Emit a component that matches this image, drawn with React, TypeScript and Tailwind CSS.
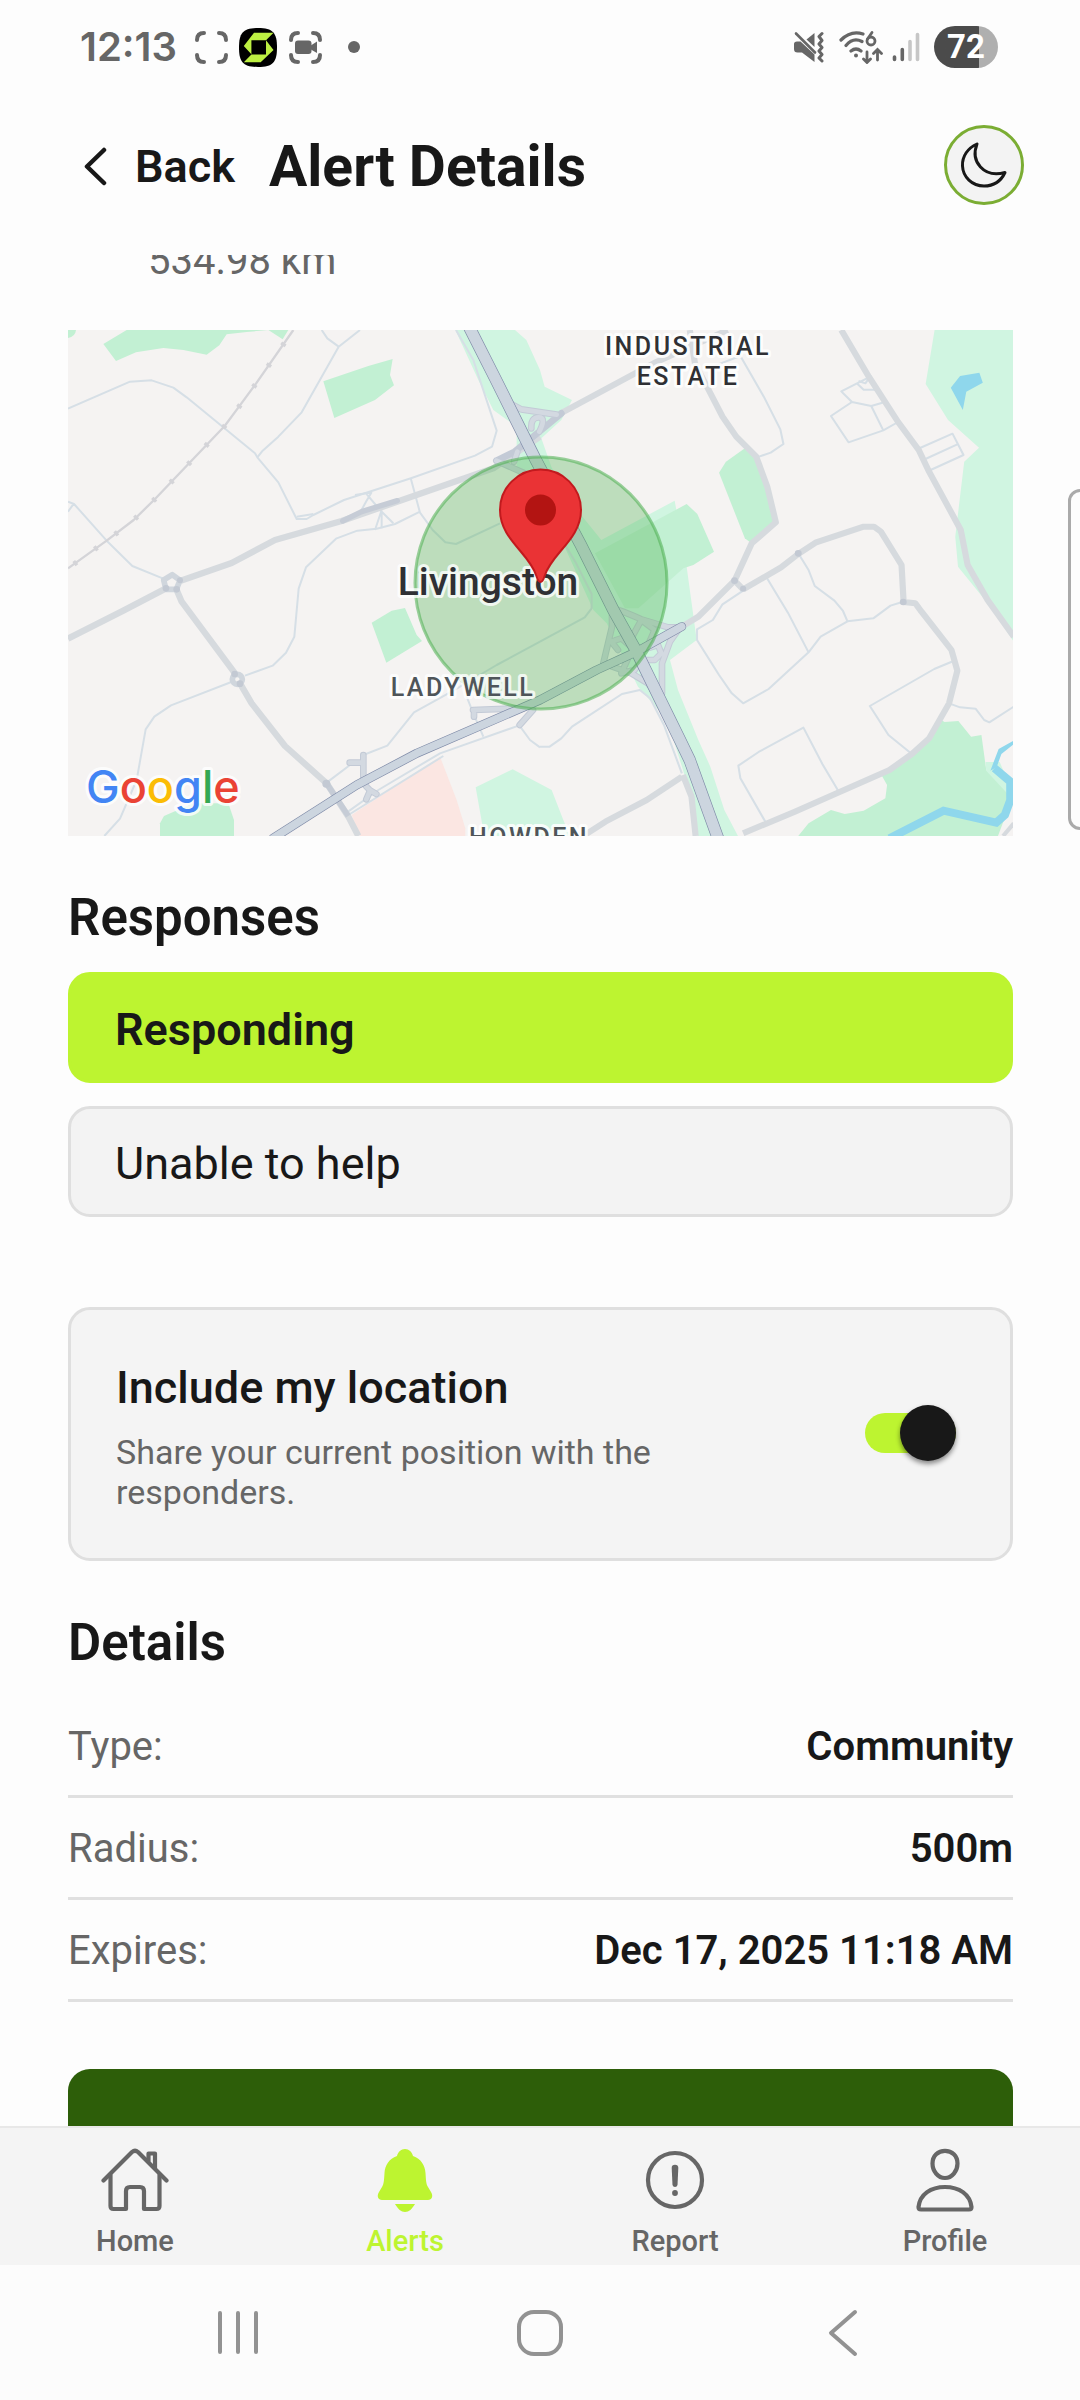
import React, { useState } from "react";

function StatusBar() {
  return (
    <div className="flex h-[78px] shrink-0 items-center justify-between pt-4 pr-[82px] pl-20 text-[#666666]">
      <div className="flex items-center">
        <span className="font-['Inter',sans-serif] text-[40px] leading-[48px] font-semibold">12:13</span>
        <svg className="ml-[18px]" width="33" height="33" viewBox="0 0 33 33" fill="none" stroke="currentColor" strokeWidth="4" strokeLinecap="round" aria-hidden="true">
          <path d="M2 9Q2 2 9 2M24 2Q31 2 31 9M31 24Q31 31 24 31M9 31Q2 31 2 24" />
        </svg>
        <svg className="ml-[11px]" width="38" height="39" viewBox="0 0 38 39" aria-hidden="true">
          <path d="M19 0C34 0 38 5 38 19.5S34 39 19 39 0 34 0 19.5 4 0 19 0Z" fill="#000" />
          <path d="M15 4.7H34.5L27 12.3H12.4V26.3L4.8 18Z" fill="#bdf042" />
          <path d="M27 12.3L34.5 22 21.7 34.3H4.8L12.4 26.6H27Z" fill="#bdf042" />
        </svg>
        <svg className="ml-3" width="33" height="33" viewBox="0 0 33 33" aria-hidden="true">
          <path d="M2 9Q2 2 9 2M24 2Q31 2 31 9M31 24Q31 31 24 31M9 31Q2 31 2 24" fill="none" stroke="currentColor" strokeWidth="4" strokeLinecap="round" />
          <rect x="6" y="9.500" width="16.500" height="13.500" rx="3" fill="currentColor" />
          <path d="M21 15L28 10.500V22L21 18Z" fill="currentColor" />
        </svg>
        <span className="ml-[26px] size-3 rounded-full bg-[#666666]" />
      </div>
      <div className="flex items-center">
        <svg width="30" height="32" viewBox="0 0 30 32" aria-hidden="true">
          <path d="M2 2.500L21 21.500" stroke="currentColor" strokeWidth="2.600" strokeLinecap="round" />
          <path d="M0 13Q0 10.500 3 10.500H6.500L20.500 23.500V31L8 21.500H3.500Q0 21.500 0 18Z" fill="currentColor" />
          <path d="M12.500 8.500L20.500 2V16Z" fill="currentColor" />
          <path d="M28 2.500L25 5.500 28 9.500 25 13 28 16.500 25 20 28 23.500 25 27 28 30" fill="none" stroke="currentColor" strokeWidth="3" strokeLinejoin="round" strokeLinecap="round" />
        </svg>
        <svg className="ml-[15px]" width="44" height="34" viewBox="0 0 44 34" fill="none" stroke="currentColor" strokeWidth="3.200" strokeLinecap="round" aria-hidden="true">
          <path d="M2 10Q12 0 24 4M7 15.500Q14 7 23 11.500M12 21Q17 17 22 21" />
          <circle cx="17" cy="25.500" r="2" fill="currentColor" stroke="none" />
          <circle cx="32" cy="11" r="4" strokeWidth="2.800" />
          <path d="M28.500 9L33 2.500" strokeWidth="2.800" />
          <path d="M28 22V32M24.500 29L28 32.500 31.500 29M38.500 30V20M34.500 23.500L38.500 19.500 42.500 23.500" strokeWidth="2.800" />
        </svg>
        <svg className="ml-[9px]" width="28" height="32" viewBox="0 0 28 32" stroke="currentColor" strokeWidth="3.600" strokeLinecap="round" aria-hidden="true">
          <path d="M2.500 26V28.500M10.300 18.500V28.500" />
          <path d="M18 10.500V28.500M25.500 3.500V28.500" stroke="#c6c6c6" />
        </svg>
        <span className="ml-3.5 flex h-[42px] w-16 items-center justify-center rounded-full bg-linear-to-r from-[#4b4b4b] from-71% to-[#afafaf] to-71% text-[33px] leading-10 font-bold text-white">
          72
        </span>
      </div>
    </div>
  );
}

function Header() {
  return (
    <header className="flex h-[177px] shrink-0 items-center pr-14 pl-[84px]">
      <button type="button" className="flex items-center text-[45px] leading-[54px] font-semibold">
        <svg className="mr-[27px]" width="24" height="40" viewBox="0 0 24 40" fill="none" stroke="currentColor" strokeWidth="4.500" strokeLinecap="round" strokeLinejoin="round" aria-hidden="true">
          <path d="M20 3L3 19.500L20 36" />
        </svg>
        Back
      </button>
      <h1 className="ml-[34px] text-[57px] leading-[66px] font-bold">Alert Details</h1>
      <button type="button" aria-label="Switch to dark theme" className="mb-[3px] ml-auto flex size-20 items-center justify-center rounded-full border-3 border-[#7bad33] bg-[#f3f3f3]">
        <svg width="48" height="48" viewBox="16 17 48 48" fill="none" stroke="currentColor" strokeWidth="3" strokeLinejoin="round" aria-hidden="true">
          <path d="M33 20C24 24 18 32 18.500 42C19 53 28 62 40 62C50 62 57 57 61 48.500C50 51.500 42 49 36.500 43C31 37 29.500 29 33 20Z" />
        </svg>
      </button>
    </header>
  );
}

function AlertMap() {
  return (
    <svg
      className="mt-[43px] block h-[506px] w-full bg-[#f5f3f2]"
      viewBox="0 0 945 506"
      preserveAspectRatio="xMidYMid slice"
      role="img"
      aria-label="Map of Livingston with the alert radius"
    >
      <g transform="scale(0.33333)" fill="none" strokeLinejoin="round">
        <rect width="2840" height="1520" fill="#f5f3f2" />

        {/* parks and woodland */}
        <g transform="translate(-24 -30)" fill="#c2f0d3">
          <path d="M130 72L200 30H625L560 36 500 43 478 76 440 104 370 90 310 84 228 97 168 123Z" />
          <path d="M625 30H685L668 58Z" />
          <path d="M24 30H48Q46 50 24 54Z" />
          <path d="M790 184L925 138 998 117 990 165 1002 196 945 240 823 294Z" />
          <path d="M935 908L995 872 1035 864 1070 945 1086 963 979 1028Z" />
          <path d="M300 1548V1510L312 1488 400 1450H505L522 1500V1548Z" />
          <path d="M1247 1402L1358 1348 1475 1410 1510 1500 1530 1548H1275L1268 1520Z" fill="#d0f5e1" />
          <path d="M875 1485L1140 1310 1190 1440 1216 1525V1548H900Z" fill="#fbe6e2" />
        </g>
        <path
          fill="#d0f5e1"
          d="M1162 0H1341L1375 30 1416 120 1430 170 1512 210 1480 270 1420 325 1450 410 1495 500 1600 630 1820 512 1856 710 1886 930 1806 990 1830 1080 1891 1230 1927 1310 1969 1440 2010 1518H1890L1870 1400 1798 1170 1710 1070 1616 880 1576 840 1476 620 1346 420 1346 290 1276 240 1231 150Z"
        />
        <path fill="#c2f0d3" d="M1581 670L1856 522 1888 552 1938 665 1876 705 1846 715 1711 835H1671Z" />
        <g transform="translate(1416 -30) scale(1.033 1)">
          <path fill="#c2f0d3" d="M520 458L540 425 600 381 630 410 665 500 690 607 612 668 595 655Z" />
          <path fill="#d0f5e1" d="M1146 30H1376V965L1300 850 1214 740 1206 650 1232 425 1275 383 1185 300 1120 192Z" />
          <path fill="#8fd7ec" d="M1193 203L1220 168 1276 158 1286 188 1238 215 1228 270Z" />
          <path fill="#c2f0d3" d="M750 1548L780 1510 845 1470 885 1482 940 1472 1003 1435 1008 1395 990 1362 1060 1318 1130 1250 1162 1198 1175 1206 1215 1203 1252 1250 1282 1245 1296 1350 1362 1420 1355 1480 1330 1548Z" />
          <path fill="#d0f5e1" d="M1294 1326H1335L1366 1400V1430L1296 1352Z" />
          <path stroke="#8fd7ec" strokeWidth="24" strokeLinejoin="miter" d="M1015 1555L1172 1472 1325 1508 1350 1485 1366 1440V1385L1320 1345" />
          <path fill="#8fd7ec" d="M1376 1262L1332 1287 1308 1352 1326 1342 1340 1302 1376 1272Z" />
        </g>

        {/* local streets */}
        <g transform="translate(-24 -30)" stroke="#d6dfe6" strokeWidth="6">
          <path d="M24 266L210 185 275 181 340 203 380 232 585 400 592 412 655 487 710 597H740L760 585 852 540 1055 474 1245 407 1296 380 1310 332 1283 250 1240 120 1188 30" />
          <path d="M710 590L760 582" />
          <path d="M785 30L802 55 836 80 900 30M836 80L725 277 655 350 608 392 592 412" />
          <path d="M24 545L42 552 140 662 217 738 310 776M42 550L24 575" />
          <path d="M885 525L918 520 934 518 918 545 902 575M918 520L960 570 1000 610M965 570L945 630M965 575V625" />
          <path d="M1052 474L1080 578 1118 630 1156 667 1188 672 1320 610M1080 575L1005 612 950 626 892 632 828 656 738 742 716 806 703 950 678 998 638 1037 555 1067" />
          <path d="M514 1086L333 1156 283 1190 257 1228 230 1380 180 1496 133 1548" />
          <path d="M1440 965L1310 1035 1180 1112 1062 1177 982 1277 910 1305M1220 1130L1240 1180 1270 1250M860 1478L955 1410 1140 1300 1378 1216 1410 1260 1440 1282" />
          <path d="M800 1388L870 1335M865 1485L1150 1308" />
        </g>
        <g transform="translate(1416 -30) scale(1.033 1)" stroke="#d6dfe6" strokeWidth="6">
          <path d="M0 965L130 892 150 865V822L105 730 70 670" />
          <path d="M0 1280H28L62 1255 93 1220 238 1122 290 1110 320 1135 360 1215 412 1360" />
          <path d="M500 140L582 108 650 230 698 328 707 372 670 398 630 412" />
          <path d="M955 172L875 214 906 246 845 288 896 367 997 331 1040 306M906 246L962 258 1002 246M962 258L997 331M920 190L940 209H980M925 183L945 190 955 175" />
          <path d="M1097 387L1198 341 1230 405 1128 453M1113 420L1212 373" />
          <path d="M590 812L530 853 502 900 456 928V960L520 1065 557 1120 590 1150 664 1107 780 997 815 950 893 904 968 895 1018 857 1052 846M655 767L720 878 780 997M750 700L780 750 798 798 855 842 880 873 893 904" />
          <path d="M1208 1020L1145 1047 958 1158 1012 1245 1080 1302M1188 1150L1220 1162 1265 1166 1290 1200 1305 1207 1376 1160" />
          <path d="M867 1414L820 1332 765 1223 635 1296 576 1337 582 1375 660 1515" />
        </g>

        {/* railway */}
        <g transform="translate(-24 -30)" stroke="#d4d4d8">
          <path strokeWidth="7" d="M24 745L140 662 221 600 285 537 494 318 537 260 590 188 700 30" />
          <path strokeWidth="16" strokeDasharray="10 66" strokeDashoffset="-22" d="M24 745L140 662 221 600 285 537 494 318 537 260 590 188 700 30" />
        </g>

        {/* main roads */}
        <g transform="translate(-24 -30)" stroke="#d6dade" strokeWidth="19">
          <path d="M24 956L190 872 318 805M362 782L515 729 645 660 845 603 1300 445 1440 350" />
          <path d="M350 810L365 845 525 1060M540 1090L575 1150 675 1278 800 1390 865 1490 895 1548" />
          <path stroke="#c6ccd6" strokeWidth="16" strokeLinecap="round" d="M848 603L905 575 1012 542" />
          <path stroke="#c6ccd6" strokeWidth="17" d="M803 1395L865 1488" />
          <path d="M337 764L360 781 349 808H318L311 780Z" stroke="#d0d6dd" strokeWidth="17" />
          <circle cx="532" cy="1078" r="15" stroke="#d0d6dd" strokeWidth="17" />
          <g fill="#c3c9d3" stroke="none">
            <circle cx="318" cy="805" r="10" /><circle cx="350" cy="808" r="10" /><circle cx="360" cy="781" r="9" />
            <circle cx="524" cy="1062" r="10" /><circle cx="540" cy="1091" r="10" /><circle cx="799" cy="1391" r="12" />
          </g>
        </g>
        <g transform="translate(1416 -30) scale(1.033 1)" stroke="#d6dade" strokeWidth="18">
          <path d="M60 280L330 130 545 30" />
          <path d="M435 30L450 130 490 210 530 290 570 350 628 410 660 500 685 607 615 670 565 782 460 890 420 915M565 782L590 808" />
          <path d="M590 808L700 742 750 702 800 668 940 620H970L990 635 1050 735 1056 846 1090 850 1108 875 1195 990 1212 1052 1188 1150 1130 1255 1080 1302 1015 1350 740 1475 590 1540" />
          <path d="M875 30L955 170 1040 306 1100 390 1130 455 1222 630 1242 735 1300 840 1376 950" />
          <path d="M412 1370L310 1440 190 1505 130 1545M415 1365L440 1430 452 1548" />
          <path d="M1345 1548L1376 1510" strokeWidth="12" />
          <g fill="#c3c9d3" stroke="none">
            <circle cx="565" cy="782" r="10" /><circle cx="590" cy="806" r="9" /><circle cx="750" cy="700" r="10" /><circle cx="1055" cy="846" r="10" />
          </g>
        </g>

        {/* junction slip roads */}
        <g strokeLinecap="round">
          <g stroke="#c3cad6" strokeWidth="20">
            <path d="M1326 220L1360 238 1466 254M1390 295Q1388 262 1412 262T1414 305M1480 250L1420 300 1340 365 1285 392M1348 365L1338 395M1285 392L1370 430" />
            <path d="M1650 840Q1680 850 1720 868L1800 892H1836L1806 935 1782 1000V1090M1632 850V890L1606 1000 1690 1030 1740 1060 1770 1100M1706 965L1660 925 1630 935 1650 960M1690 925L1720 870 1760 900 1740 945M1706 965L1770 945 1780 970 1760 990H1720L1700 1020 1660 1030 1680 985" />
            <path d="M845 1298L886 1298V1360M886 1275V1360L905 1380 925 1392M905 1385L895 1408M1215 1140L1345 1135M1218 1150V1160M1395 1140L1355 1185" />
          </g>
          <g stroke="#d3d9e1" strokeWidth="14">
            <path d="M1326 220L1360 238 1466 254M1390 295Q1388 262 1412 262T1414 305M1348 365L1338 395M1285 392L1370 430" />
            <path d="M1650 840Q1680 850 1720 868L1800 892H1836L1806 935 1782 1000V1090M1632 850V890L1606 1000 1690 1030 1740 1060 1770 1100M1706 965L1660 925 1630 935 1650 960M1690 925L1720 870 1760 900 1740 945M1706 965L1770 945 1780 970 1760 990H1720L1700 1020 1660 1030 1680 985" />
            <path d="M845 1298L886 1298V1360M886 1275V1360L905 1380 925 1392M905 1385L895 1408M1215 1140L1345 1135M1218 1150V1160M1395 1140L1355 1185" />
          </g>
        </g>

        {/* trunk roads */}
        <g stroke="#7f8ba8">
          <path strokeWidth="27" d="M615 1525L866 1365 1046 1270 1416 1110 1586 1020 1706 965 1841 890" strokeLinecap="round" />
          <path strokeWidth="37" d="M1203 -10L1284 150 1401 385 1536 640 1636 840 1706 965 1836 1230 1865 1290 1950 1525" />
        </g>
        <g stroke="#ccd5df">
          <path strokeWidth="23" d="M615 1525L866 1365 1046 1270 1416 1110 1586 1020 1706 965 1841 890" strokeLinecap="round" />
          <path strokeWidth="33" d="M1203 -10L1284 150 1401 385 1536 640 1636 840 1706 965 1836 1230 1865 1290 1950 1525" />
        </g>
      </g>

      <g className="text-[25px] font-medium tracking-widest" fill="#2f3034" stroke="#ffffff" strokeWidth="6" strokeOpacity="0.85" strokeLinejoin="round" style={{ paintOrder: "stroke" }}>
        <text x="620" y="25" textAnchor="middle">INDUSTRIAL</text>
        <text x="620" y="55" textAnchor="middle">ESTATE</text>
        <text x="461" y="516" textAnchor="middle" fill="#4f5559">HOWDEN</text>
      </g>

      <circle cx="473" cy="253" r="126" fill="#4caf50" fillOpacity="0.33" stroke="#4caf50" strokeOpacity="0.55" strokeWidth="3" />

      <g stroke="#ffffff" strokeWidth="6" strokeOpacity="0.8" strokeLinejoin="round" style={{ paintOrder: "stroke" }}>
        <text x="395" y="366" textAnchor="middle" fill="#4f5559" className="text-[25px] font-medium tracking-widest">LADYWELL</text>
        <text x="420" y="265" textAnchor="middle" fill="#2f3034" className="text-[39px] font-medium">Livingston</text>
        <text x="18" y="473" className="font-['Inter',sans-serif] text-[45px] font-medium">
          <tspan fill="#4285f4">G</tspan>
          <tspan fill="#ea4335">o</tspan>
          <tspan fill="#fbbc05">o</tspan>
          <tspan fill="#4285f4">g</tspan>
          <tspan fill="#34a853">l</tspan>
          <tspan fill="#ea4335">e</tspan>
        </text>
      </g>

      <path d="M472.500 252C470 252 469.500 249 468 245C461 223 432 209 432 180A40.500 40.500 0 0 1 513 180C513 209 484 223 477 245C475.500 249 475 252 472.500 252Z" fill="#ea3335" stroke="#c21a1e" strokeWidth="2" />
      <circle cx="472.500" cy="180" r="15.500" fill="#b31412" />
    </svg>
  );
}

function Responses() {
  const [choice, setChoice] = useState("Responding");
  return (
    <section>
      <h2 className="mt-[52px] text-[51px] leading-[60px] font-semibold">Responses</h2>
      <div className="mt-6 flex flex-col gap-[23px]">
        {["Responding", "Unable to help"].map((label) => (
          <button
            key={label}
            type="button"
            aria-pressed={choice === label}
            onClick={() => setChoice(label)}
            className={
              choice === label
                ? "h-[111px] rounded-[22px] border-3 border-[#bdf430] bg-[#bdf430] px-11 pt-1 text-left text-[45px] leading-[54px] font-semibold"
                : "h-[111px] rounded-[22px] border-3 border-[#dfdfdf] bg-[#f3f3f3] px-11 pt-1 text-left text-[45px] leading-[54px]"
            }
          >
            {label}
          </button>
        ))}
      </div>
    </section>
  );
}

function LocationCard() {
  const [on, setOn] = useState(true);
  return (
    <section className="mt-[90px] flex items-center justify-between rounded-[22px] border-3 border-[#dfdfdf] bg-[#f4f4f4] pt-[50px] pr-[54px] pb-[46px] pl-[45px]">
      <div className="w-[620px]">
        <label htmlFor="share-location" className="block text-[45px] leading-[56px] font-medium">
          Include my location
        </label>
        <p id="share-location-hint" className="mt-4 text-[34px] leading-10 text-[#666666]">
          Share your current position with the responders.
        </p>
      </div>
      <span className="relative mb-1.5 flex h-14 w-[91px] items-center">
        <input
          id="share-location"
          type="checkbox"
          role="switch"
          aria-describedby="share-location-hint"
          checked={on}
          onChange={() => setOn(!on)}
          className="peer h-10 w-full appearance-none rounded-full bg-[#cfcfcf] checked:bg-[#bdf430]"
        />
        <span className="pointer-events-none absolute left-0 size-14 rounded-full bg-[#181818] shadow-[0_3px_5px_rgba(0,0,0,0.45)] peer-checked:right-0 peer-checked:left-auto" />
      </span>
    </section>
  );
}

const DETAILS = [
  ["Type:", "Community"],
  ["Radius:", "500m"],
  ["Expires:", "Dec 17, 2025 11:18 AM"],
];

function Details() {
  return (
    <section>
      <h2 className="mt-[52px] text-[51px] leading-[60px] font-semibold">Details</h2>
      <dl className="mt-[23px] text-[40px] leading-12">
        {DETAILS.map(([name, value]) => (
          <div key={name} className="flex h-[102px] items-start justify-between border-b-3 border-[#e0e0e0] pt-[27px]">
            <dt className="text-[#666666]">{name}</dt>
            <dd className="font-semibold">{value}</dd>
          </div>
        ))}
      </dl>
    </section>
  );
}

const ICON = { width: 68, height: 68, viewBox: "0 0 68 68", "aria-hidden": true } as const;

function HomeIcon() {
  return (
    <svg {...ICON} fill="none" stroke="currentColor" strokeWidth="4.200" strokeLinecap="round" strokeLinejoin="round">
      <path d="M2.500 34.500L31 6Q34 3.500 37 6L65.500 34.500" />
      <path d="M9.500 29V60Q9.500 63 12.500 63H25V45Q25 41 29 41H39Q43 41 43 45V63H55.500Q58.500 63 58.500 60V29" />
      <path d="M47.500 15V7.500H54V22" />
    </svg>
  );
}

function BellIcon() {
  return (
    <svg {...ICON} fill="currentColor">
      <path d="M34 3C38 3 41 6 42 10C50 13 54 19 54.500 27C55 34 55 38 57 41L60 46C62.500 50 61 54 57 54H11C7 54 5.500 50 8 46L11 41C13 38 13 34 13.500 27C14 19 18 13 26 10C27 6 30 3 34 3Z" />
      <path d="M24 58H44C41 63 38 66 34 66S27 63 24 58Z" />
    </svg>
  );
}

function ReportIcon() {
  return (
    <svg {...ICON}>
      <circle cx="34" cy="34" r="27" fill="none" stroke="currentColor" strokeWidth="4.200" />
      <path d="M30.700 22Q30.700 18.700 34 18.700T37.300 22L36.500 39Q36 41 34 41T31.500 39Z" fill="currentColor" />
      <circle cx="34" cy="47" r="2.900" fill="currentColor" />
    </svg>
  );
}

function ProfileIcon() {
  return (
    <svg {...ICON} fill="none" stroke="currentColor" strokeWidth="4.200" strokeLinejoin="round">
      <path d="M34 4.800C41 4.800 46.500 10 46.500 17.500S41 32 34 32 21.500 25 21.500 17.500 27 4.800 34 4.800Z" />
      <path d="M7.500 61C9 48 20 41 34 41S59 48 60.500 61Q60.500 63.500 58 63.500H10Q7.500 63.500 7.500 61Z" />
    </svg>
  );
}

const TABS = [
  { label: "Home", Icon: HomeIcon, active: false },
  { label: "Alerts", Icon: BellIcon, active: true },
  { label: "Report", Icon: ReportIcon, active: false },
  { label: "Profile", Icon: ProfileIcon, active: false },
];

function TabBar() {
  return (
    <nav className="grid h-[139px] shrink-0 grid-cols-4 border-t-2 border-[#e8e8e8] bg-[#f4f4f4] pt-[18px]">
      {TABS.map(({ label, Icon, active }) => (
        <a
          key={label}
          href={`#${label.toLowerCase()}`}
          aria-current={active ? "page" : undefined}
          className={active ? "flex flex-col items-center gap-2.5 text-[#bdf430]" : "flex flex-col items-center gap-2.5 text-[#666666]"}
        >
          <Icon />
          <span className="text-[29px] leading-[34px] font-medium">{label}</span>
        </a>
      ))}
    </nav>
  );
}

function SystemNav() {
  return (
    <div className="flex h-[135px] shrink-0 items-center justify-between bg-[#fcfcfc] px-[214px] text-[#929292]">
      <button type="button" aria-label="Recent apps">
        <svg width="48" height="48" viewBox="0 0 48 48" stroke="currentColor" strokeWidth="4" strokeLinecap="round">
          <path d="M6 4V43M24 4V43M42 4V43" />
        </svg>
      </button>
      <button type="button" aria-label="Home screen">
        <svg width="48" height="48" viewBox="0 0 48 48" fill="none" stroke="currentColor" strokeWidth="4">
          <rect x="3" y="3" width="42" height="42" rx="15" />
        </svg>
      </button>
      <button type="button" aria-label="Go back">
        <svg width="48" height="48" viewBox="0 0 48 48" fill="none" stroke="currentColor" strokeWidth="4" strokeLinecap="round" strokeLinejoin="round">
          <path d="M37 3L13 24L37 45" />
        </svg>
      </button>
    </div>
  );
}

export default function App() {
  return (
    <div className="relative flex h-screen flex-col overflow-hidden bg-[#fdfdfd] font-['Roboto',sans-serif] text-[#181818]">
      <StatusBar />
      <Header />
      <main className="min-h-0 flex-1 overflow-hidden pr-[67px] pl-[68px]">
        <p className="-mt-5 pl-20 text-[40px] leading-[52px] text-[#666666]">534.98 km</p>
        <AlertMap />
        <Responses />
        <LocationCard />
        <Details />
        <button type="button" aria-label="Open chat" className="mt-[67px] block h-[140px] w-full rounded-[22px] bg-[#2d5e09]" />
      </main>
      <TabBar />
      <SystemNav />
      <div className="absolute top-[489px] -right-3 h-[341px] w-6 rounded-xl border-3 border-[#aaaaaa] bg-[#fdfdfd]" />
    </div>
  );
}
